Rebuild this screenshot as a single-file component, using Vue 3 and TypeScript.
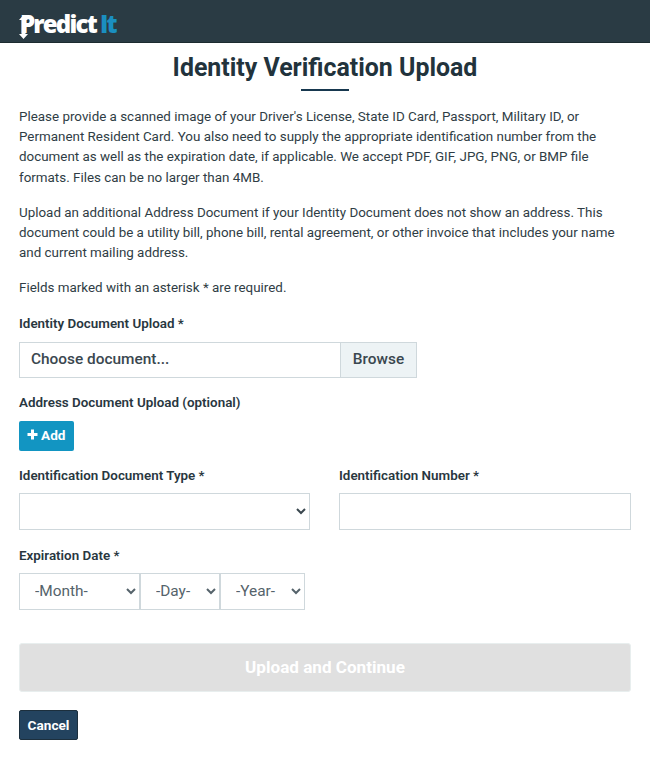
<script setup lang="ts">
const months: string[] = ['-Month-']
const days: string[] = ['-Day-']
const years: string[] = ['-Year-']
</script>

<template>
  <div class="page">
    <header class="topbar">
      <div class="logo">
        <span class="logo-white">Predict</span><span class="logo-blue">It</span>
        <svg class="logo-arrow" width="9" height="24" viewBox="0 0 9 24" aria-hidden="true">
          <path d="M4.5 0 L9 5 H6.5 V19 H9 L4.5 24 L0 19 H2.5 V5 H0 Z" fill="#fff" />
        </svg>
      </div>
    </header>

    <main class="content">
      <h1 class="title">Identity Verification Upload</h1>
      <div class="rule"></div>

      <p class="para first">
        Please provide a scanned image of your Driver's License, State ID Card, Passport, Military ID, or Permanent Resident Card. You also need to supply the appropriate identification number from the document as well as the expiration date, if applicable. We accept PDF, GIF, JPG, PNG, or BMP file formats. Files can be no larger than 4MB.
      </p>
      <p class="para">
        Upload an additional Address Document if your Identity Document does not show an address. This document could be a utility bill, phone bill, rental agreement, or other invoice that includes your name and current mailing address.
      </p>
      <p class="para">Fields marked with an asterisk * are required.</p>

      <label class="label id-label">Identity Document Upload *</label>
      <div class="file">
        <span class="file-name">Choose document...</span>
        <span class="file-browse">Browse</span>
      </div>

      <label class="label addr-label">Address Document Upload (optional)</label>
      <button class="add" type="button">
        <svg width="11" height="11" viewBox="0 0 11 11" aria-hidden="true">
          <path d="M4 0.5 H7 V4 H10.5 V7 H7 V10.5 H4 V7 H0.5 V4 H4 Z" fill="#fff" />
        </svg>
        <span>Add</span>
      </button>

      <div class="two-col">
        <div class="col">
          <label class="label">Identification Document Type *</label>
          <select class="control"><option></option></select>
        </div>
        <div class="col">
          <label class="label">Identification Number *</label>
          <input class="control" type="text" />
        </div>
      </div>

      <label class="label exp-label">Expiration Date *</label>
      <div class="date-row">
        <select class="date month"><option v-for="m in months" :key="m">{{ m }}</option></select>
        <select class="date day"><option v-for="d in days" :key="d">{{ d }}</option></select>
        <select class="date year"><option v-for="y in years" :key="y">{{ y }}</option></select>
      </div>

      <button class="submit" type="button" disabled>Upload and Continue</button>
      <button class="cancel" type="button">Cancel</button>
    </main>
  </div>
</template>

<style scoped>
.page {
  width: 650px;
  height: 765px;
  background: #fff;
  color: #29373f;
  font-family: Roboto, "Liberation Sans", sans-serif;
  overflow: hidden;
}
.topbar {
  height: 42px;
  background: #2a3b44;
  border-bottom: 1px solid #1c2b30;
  padding-left: 20px;
  box-sizing: content-box;
}
.logo {
  position: relative;
  display: flex;
  align-items: baseline;
  height: 42px;
  line-height: 47px;
  font-family: "Open Sans", sans-serif;
  font-size: 24px;
  font-weight: 800;
  letter-spacing: -1.8px;
}
.logo-arrow {
  position: absolute;
  left: -1px;
  top: 15px;
}
.logo-white {
  color: #fff;
}
.logo-blue {
  color: #1a8fc0;
  margin-left: 4px;
  font-size: 24px;
  font-weight: 800;
  letter-spacing: -1.8px;
}
.content {
  padding: 0 19px;
}
.title {
  margin: 8px 0 0;
  font-size: 24.9px;
  line-height: 34px;
  font-weight: 700;
  text-align: center;
  color: #22333c;
}
.rule {
  width: 48px;
  height: 2px;
  margin: 4px auto 0;
  background: #17384f;
}
.para {
  margin: 0 0 15px;
  font-size: 13.4px;
  line-height: 20.2px;
  color: #2f3d45;
}
.para.first {
  margin-top: 16px;
}
.label {
  display: block;
  font-size: 13.4px;
  line-height: 20px;
  font-weight: 600;
  color: #29373f;
}
.id-label {
  margin-top: 13px;
}
.file {
  display: flex;
  width: 398px;
  height: 36px;
  margin-top: 8px;
  border: 1px solid #cfd8dc;
  box-sizing: border-box;
}
.file-name {
  flex: 1;
  padding-left: 11px;
  font-size: 15.4px;
  line-height: 33px;
  font-weight: 500;
  color: #3a474f;
}
.file-browse {
  width: 75px;
  text-align: center;
  background: #edf3f5;
  border-left: 1px solid #cfd8dc;
  font-size: 15.4px;
  line-height: 33px;
  font-weight: 500;
  color: #3a474f;
}
.addr-label {
  margin-top: 15px;
}
.add {
  display: flex;
  align-items: center;
  gap: 3px;
  width: 55px;
  height: 30px;
  margin-top: 8px;
  padding: 0 0 2px 8px;
  border: 0;
  border-radius: 2px;
  background: #1295c2;
  color: #fff;
  font-family: inherit;
  font-size: 13.6px;
  font-weight: 700;
}
.two-col {
  display: grid;
  grid-template-columns: 291px 292px;
  column-gap: 29px;
  margin-top: 15px;
}
.col .label {
  margin-bottom: 7px;
}
.control {
  display: block;
  width: 100%;
  height: 37px;
  box-sizing: border-box;
  border: 1px solid #cfd8dc;
  border-radius: 0;
  background-color: #fff;
  color: #3a474f;
  font-family: inherit;
  font-size: 15.4px;
  outline: none;
}
.exp-label {
  margin-top: 16px;
}
.date-row {
  display: flex;
  margin-top: 7px;
}
.date {
  height: 37px;
  box-sizing: border-box;
  border: 1px solid #cfd8dc;
  border-radius: 0;
  background-color: #fff;
  color: #55636b;
  font-family: inherit;
  font-size: 15.4px;
  font-weight: 400;
  padding: 0 0 0 11px;
  outline: none;
}
.month { width: 121px; }
.day { width: 80px; }
.year { width: 85px; }
.submit {
  display: block;
  width: 612px;
  height: 49px;
  margin-top: 33px;
  border: 1px solid #e8eeee;
  border-radius: 3px;
  background: #e0e0e0;
  color: #fff;
  font-family: inherit;
  font-size: 17.1px;
  font-weight: 700;
}
.cancel {
  display: block;
  width: 59px;
  height: 30px;
  margin-top: 18px;
  padding: 0;
  border: 1px solid #1c2f3d;
  border-radius: 2px;
  background: #23435f;
  color: #fff;
  font-family: inherit;
  font-size: 13.6px;
  font-weight: 700;
}
</style>
